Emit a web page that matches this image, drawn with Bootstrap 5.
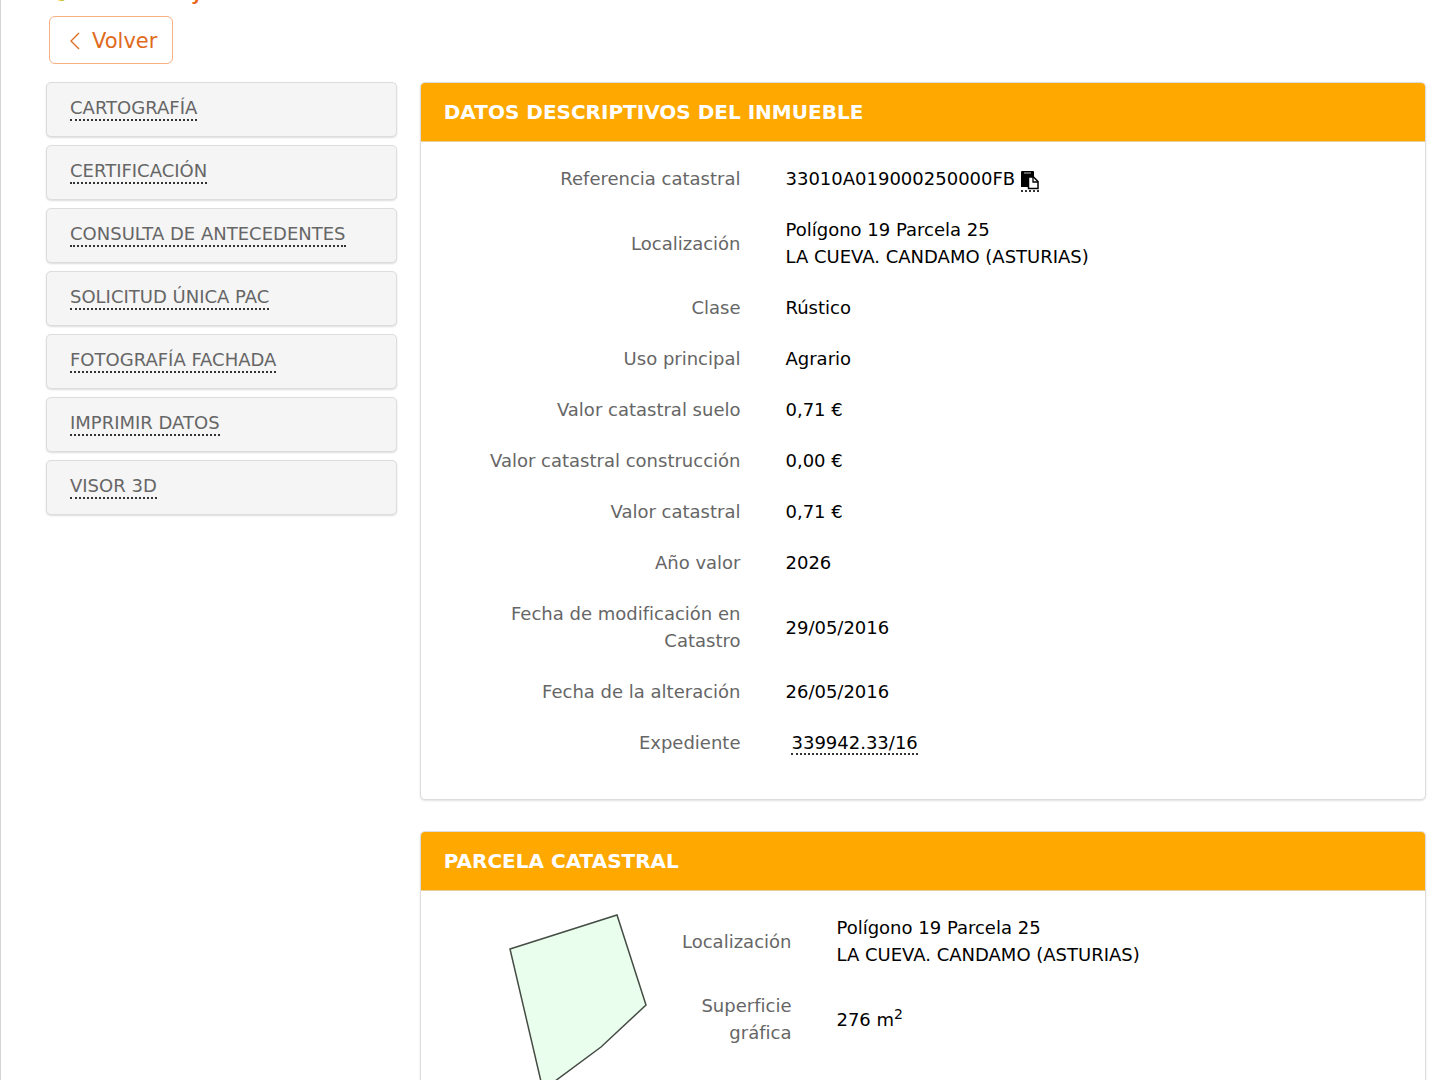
<!DOCTYPE html>
<html lang="es">
<head>
<meta charset="utf-8">
<meta name="viewport" content="width=device-width, initial-scale=1">
<title>Consulta y certificación de Bien Inmueble</title>
<link href="https://cdn.jsdelivr.net/npm/bootstrap@5.3.0/dist/css/bootstrap.min.css" rel="stylesheet">
<style>
  html { overflow: hidden; }
  body { font-family: Verdana, "DejaVu Sans", sans-serif; font-size: 18px; line-height: 27px; color: #000; height: 100vh; overflow: hidden; border-left: 1px solid #d4d4d4; }
  .page-title { height: 16px; padding: 0 0 10px 53px; font-size: 18px; line-height: 24px; font-weight: 700; color: #e8691c; gap: 12px; }
  .page-title svg { flex: none; margin-bottom: 5px; }
  .back-row { padding-left: 48px; }
  .btn-back { --bs-btn-color: #e06a1c; --bs-btn-border-color: #f5b083; --bs-btn-hover-bg: #e06a1c; --bs-btn-hover-color: #fff; --bs-btn-font-size: 21px; --bs-btn-line-height: 30px; --bs-btn-padding-x: 15px; gap: 9px; padding-top: 9px; padding-bottom: 7px; }
  .main-area { display: grid; grid-template-columns: minmax(0, 351fr) minmax(0, 1007fr); column-gap: 23px; padding: 18px 14px 0 45px; }
  .side-list { gap: 8px; }
  .side-item { padding: 11px 23px 15px; background: #f5f5f5; border: 1px solid #ddd; border-radius: 5px; box-shadow: 0 1px 2px rgba(0,0,0,.14); }
  .dotted { text-decoration: none; border-bottom: 2px dotted #333; color: inherit; }
  .side-item .dotted { color: #666; padding-bottom: 1px; }
  .data-card { --bs-card-border-color: #ddd; --bs-card-border-radius: 5px; --bs-card-inner-border-radius: 4px; --bs-card-cap-bg: #ffa800; --bs-card-cap-color: #fff; --bs-card-cap-padding-x: 23px; --bs-card-cap-padding-y: 15px; box-shadow: 0 1px 2px rgba(0,0,0,.12); margin-bottom: 31px; }
  .data-card .card-header { border-bottom-color: #e8cf9a; font-weight: 700; font-size: 20px; line-height: 28px; margin: 0; }
  .data-card .card-body { padding: 23px 23px 43px; }
  .data-list { gap: 24px; margin: 0; }
  .data-line { display: grid; grid-template-columns: minmax(0, 297fr) minmax(0, 617fr); column-gap: 45px; align-items: center; }
  .data-line dt { font-weight: 400; color: #666; text-align: right; }
  .data-line dd { margin: 0; }
  .copy-link { padding: 0; border: 0; border-bottom: 2px dotted #333; background: none; vertical-align: -5px; }
  .copy-link svg { display: block; }
  .exp { margin-left: 6px; }
  .parcel { display: grid; grid-template-columns: minmax(0, 231fr) minmax(0, 728fr); }
  .parcel .data-line { grid-template-columns: minmax(0, 117fr) minmax(0, 566fr); }
  .parcel-map { display: block; margin-left: auto; }
  sup { font-size: 14px; }
</style>
</head>
<body>
<h1 class="page-title d-flex align-items-end m-0 text-nowrap"><svg width="14" height="14" viewBox="0 0 14 14" aria-hidden="true"><circle cx="7" cy="7" r="7" fill="#ffc93c"/><path d="M7 14a7 7 0 0 0 5-2L7 7z" fill="#a5c83c"/></svg>CONSULTA y CERTIFICACIÓN DE BIEN INMUEBLE</h1>
<div class="back-row">
  <button type="button" class="btn btn-back d-inline-flex align-items-center"><svg width="18" height="20" viewBox="0 0 18 20" fill="none" stroke="currentColor" stroke-width="1.3" aria-hidden="true"><path d="M14 2 6 10l8 8"/></svg>Volver</button>
</div>
<main class="main-area">
  <nav class="side-list d-flex flex-column">
    <div class="side-item"><a class="dotted" href="#">CARTOGRAFÍA</a></div>
    <div class="side-item"><a class="dotted" href="#">CERTIFICACIÓN</a></div>
    <div class="side-item"><a class="dotted" href="#">CONSULTA DE ANTECEDENTES</a></div>
    <div class="side-item"><a class="dotted" href="#">SOLICITUD ÚNICA PAC</a></div>
    <div class="side-item"><a class="dotted" href="#">FOTOGRAFÍA FACHADA</a></div>
    <div class="side-item"><a class="dotted" href="#">IMPRIMIR DATOS</a></div>
    <div class="side-item"><a class="dotted" href="#">VISOR 3D</a></div>
  </nav>
  <div>
    <section class="card data-card">
      <h2 class="card-header">DATOS DESCRIPTIVOS DEL INMUEBLE</h2>
      <div class="card-body">
        <dl class="data-list d-flex flex-column">
          <div class="data-line"><dt>Referencia catastral</dt><dd>33010A019000250000FB <button type="button" class="copy-link" aria-label="Copiar"><svg width="18" height="19" viewBox="0 0 18 19" aria-hidden="true"><path d="M1 0h11a1 1 0 0 1 1 1v5H7v10H0V1a1 1 0 0 1 1-1z"/><path d="M3 2h7" stroke="#bbb"/><path d="M7.500 6h5l4.500 4.500V17.500H7.500z" fill="#fff" stroke="#000" stroke-width="1.500"/><path d="M12 6v5h5" fill="none" stroke="#000" stroke-width="1.300"/></svg></button></dd></div>
          <div class="data-line"><dt>Localización</dt><dd>Polígono 19 Parcela 25<br>LA CUEVA. CANDAMO (ASTURIAS)</dd></div>
          <div class="data-line"><dt>Clase</dt><dd>Rústico</dd></div>
          <div class="data-line"><dt>Uso principal</dt><dd>Agrario</dd></div>
          <div class="data-line"><dt>Valor catastral suelo</dt><dd>0,71 €</dd></div>
          <div class="data-line"><dt>Valor catastral construcción</dt><dd>0,00 €</dd></div>
          <div class="data-line"><dt>Valor catastral</dt><dd>0,71 €</dd></div>
          <div class="data-line"><dt>Año valor</dt><dd>2026</dd></div>
          <div class="data-line"><dt>Fecha de modificación en Catastro</dt><dd>29/05/2016</dd></div>
          <div class="data-line"><dt>Fecha de la alteración</dt><dd>26/05/2016</dd></div>
          <div class="data-line"><dt>Expediente</dt><dd><a class="dotted exp" href="#">339942.33/16</a></dd></div>
        </dl>
      </div>
    </section>
    <section class="card data-card">
      <h2 class="card-header">PARCELA CATASTRAL</h2>
      <div class="card-body parcel">
        <svg class="parcel-map" width="180" height="200" viewBox="495 914 180 200" role="img" aria-label="Parcela"><path d="M510 949 617 915l29 90-45 42-58 43z" fill="#eafeee" stroke="#444c44" stroke-width="1.500"/></svg>
        <dl class="data-list d-flex flex-column">
          <div class="data-line"><dt>Localización</dt><dd>Polígono 19 Parcela 25<br>LA CUEVA. CANDAMO (ASTURIAS)</dd></div>
          <div class="data-line"><dt>Superficie gráfica</dt><dd>276 m<sup>2</sup></dd></div>
        </dl>
      </div>
    </section>
  </div>
</main>
<script src="https://cdn.jsdelivr.net/npm/bootstrap@5.3.0/dist/js/bootstrap.bundle.min.js"></script>
</body>
</html>
